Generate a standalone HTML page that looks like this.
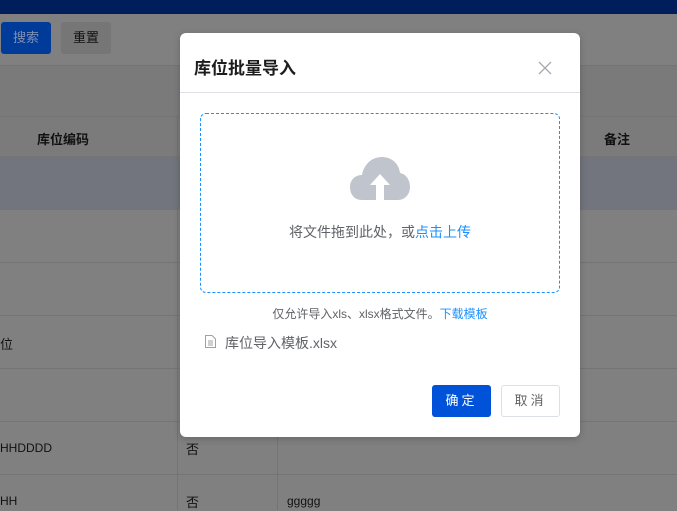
<!DOCTYPE html>
<html><head><meta charset="utf-8"><style>
*{margin:0;padding:0;box-sizing:border-box}
body{width:677px;height:510px;overflow:hidden;background:#808080;font-family:"Liberation Sans","Noto Sans CJK SC",sans-serif;position:relative}
.a{position:absolute}
.line{position:absolute;left:0;width:677px;height:1px;background:#747474}
.modal{position:absolute;left:180px;top:33px;width:400px;height:404px;background:#fff;border-radius:6px;box-shadow:0 2px 8px rgba(0,0,0,.2)}
</style></head><body>
<div class="a" style="left:0;top:0;width:677px;height:14px;background:#001e5c"></div>
<div class="a" style="left:1px;top:22px;width:50px;height:32px;background:#003b9a;border-radius:3px;color:#7f90b5;font-size:13px;line-height:32px;text-align:center">搜索</div>
<div class="a" style="left:61px;top:22px;width:50px;height:32px;background:#767676;border-radius:3px;color:#111;font-size:13px;line-height:32px;text-align:center">重置</div>
<div class="a" style="left:0;top:65px;width:677px;height:52px;background:#7a7a7a"></div>
<div class="a" style="left:0;top:117px;width:677px;height:39px;background:#7b7b7b"></div>
<div class="a" style="left:0;top:156px;width:677px;height:53px;background:#72757d"></div>
<div class="line" style="top:65px"></div><div class="line" style="top:116px"></div><div class="line" style="top:156px"></div>
<div class="line" style="top:209px"></div><div class="line" style="top:262px"></div><div class="line" style="top:315px"></div><div class="line" style="top:368px"></div><div class="line" style="top:421px"></div><div class="line" style="top:474px"></div>
<div class="a" style="left:177px;top:117px;width:1px;height:393px;background:#747474"></div>
<div class="a" style="left:277px;top:421px;width:1px;height:89px;background:#747474"></div>
<div class="a" style="left:37px;top:129px;font-size:13px;font-weight:bold;color:#111">库位编码</div>
<div class="a" style="left:604px;top:129px;font-size:13px;font-weight:bold;color:#111">备注</div>
<div class="a" style="left:0;top:334px;font-size:13px;color:#111">位</div>
<div class="a" style="left:0;top:441px;font-size:12px;color:#111">HHDDDD</div>
<div class="a" style="left:186px;top:439px;font-size:13px;color:#111">否</div>
<div class="a" style="left:0;top:494px;font-size:12px;color:#111">HH</div>
<div class="a" style="left:186px;top:492px;font-size:13px;color:#111">否</div>
<div class="a" style="left:287px;top:494px;font-size:12px;color:#111">ggggg</div>
<div class="modal">
<div class="a" style="left:14px;top:21px;font-size:17px;font-weight:bold;color:#1d1d1d">库位批量导入</div>
<svg class="a" style="left:358px;top:28px" width="14" height="14" viewBox="0 0 14 14"><path d="M1 1L13 13M13 1L1 13" stroke="#a8abb2" stroke-width="1.3"/></svg>
<div class="a" style="left:0;top:59px;width:400px;height:1px;background:#dcdfe6"></div>
<div class="a" style="left:20px;top:80px;width:360px;height:180px;border:1px dashed #1890ff;border-radius:6px"></div>
<svg class="a" style="left:170px;top:123px" width="60" height="45" viewBox="0 0 60 45"><path d="M12 44C4 44 0 38 0 31C0 24 5 19 12 19C14 8 22 1 32 1C42 1 49 8 50 17C56 18 60 24 60 31C60 38 55 44 48 44Z" fill="#c0c4cc"/><path d="M30 18L20 29H26V44H34V29H40Z" fill="#fff"/></svg>
<div class="a" style="left:0;top:189px;width:400px;text-align:center;font-size:14px;color:#606266">将文件拖到此处，或<span style="color:#1890ff">点击上传</span></div>
<div class="a" style="left:0;top:272px;width:400px;text-align:center;font-size:12px;color:#606266">仅允许导入xls、xlsx格式文件。<span style="color:#1890ff">下载模板</span></div>
<svg class="a" style="left:25px;top:302px" width="11" height="13" viewBox="0 0 11 13"><path d="M.5.5H7L10.5 4V12.5H.5Z" fill="none" stroke="#a0a0a0"/><path d="M3 6H8M3 8H8M3 10H8" stroke="#a0a0a0"/></svg>
<div class="a" style="left:45px;top:300px;font-size:14px;color:#606266">库位导入模板.xlsx</div>
<div class="a" style="left:252px;top:352px;width:59px;height:32px;background:#0052d9;border-radius:3px;color:#fff;font-size:13px;line-height:32px;text-align:center;letter-spacing:3px">确定</div>
<div class="a" style="left:321px;top:352px;width:59px;height:32px;border:1px solid #dcdfe6;border-radius:3px;color:#606266;font-size:13px;line-height:30px;text-align:center;letter-spacing:3px">取消</div>
</div>
</body></html>
